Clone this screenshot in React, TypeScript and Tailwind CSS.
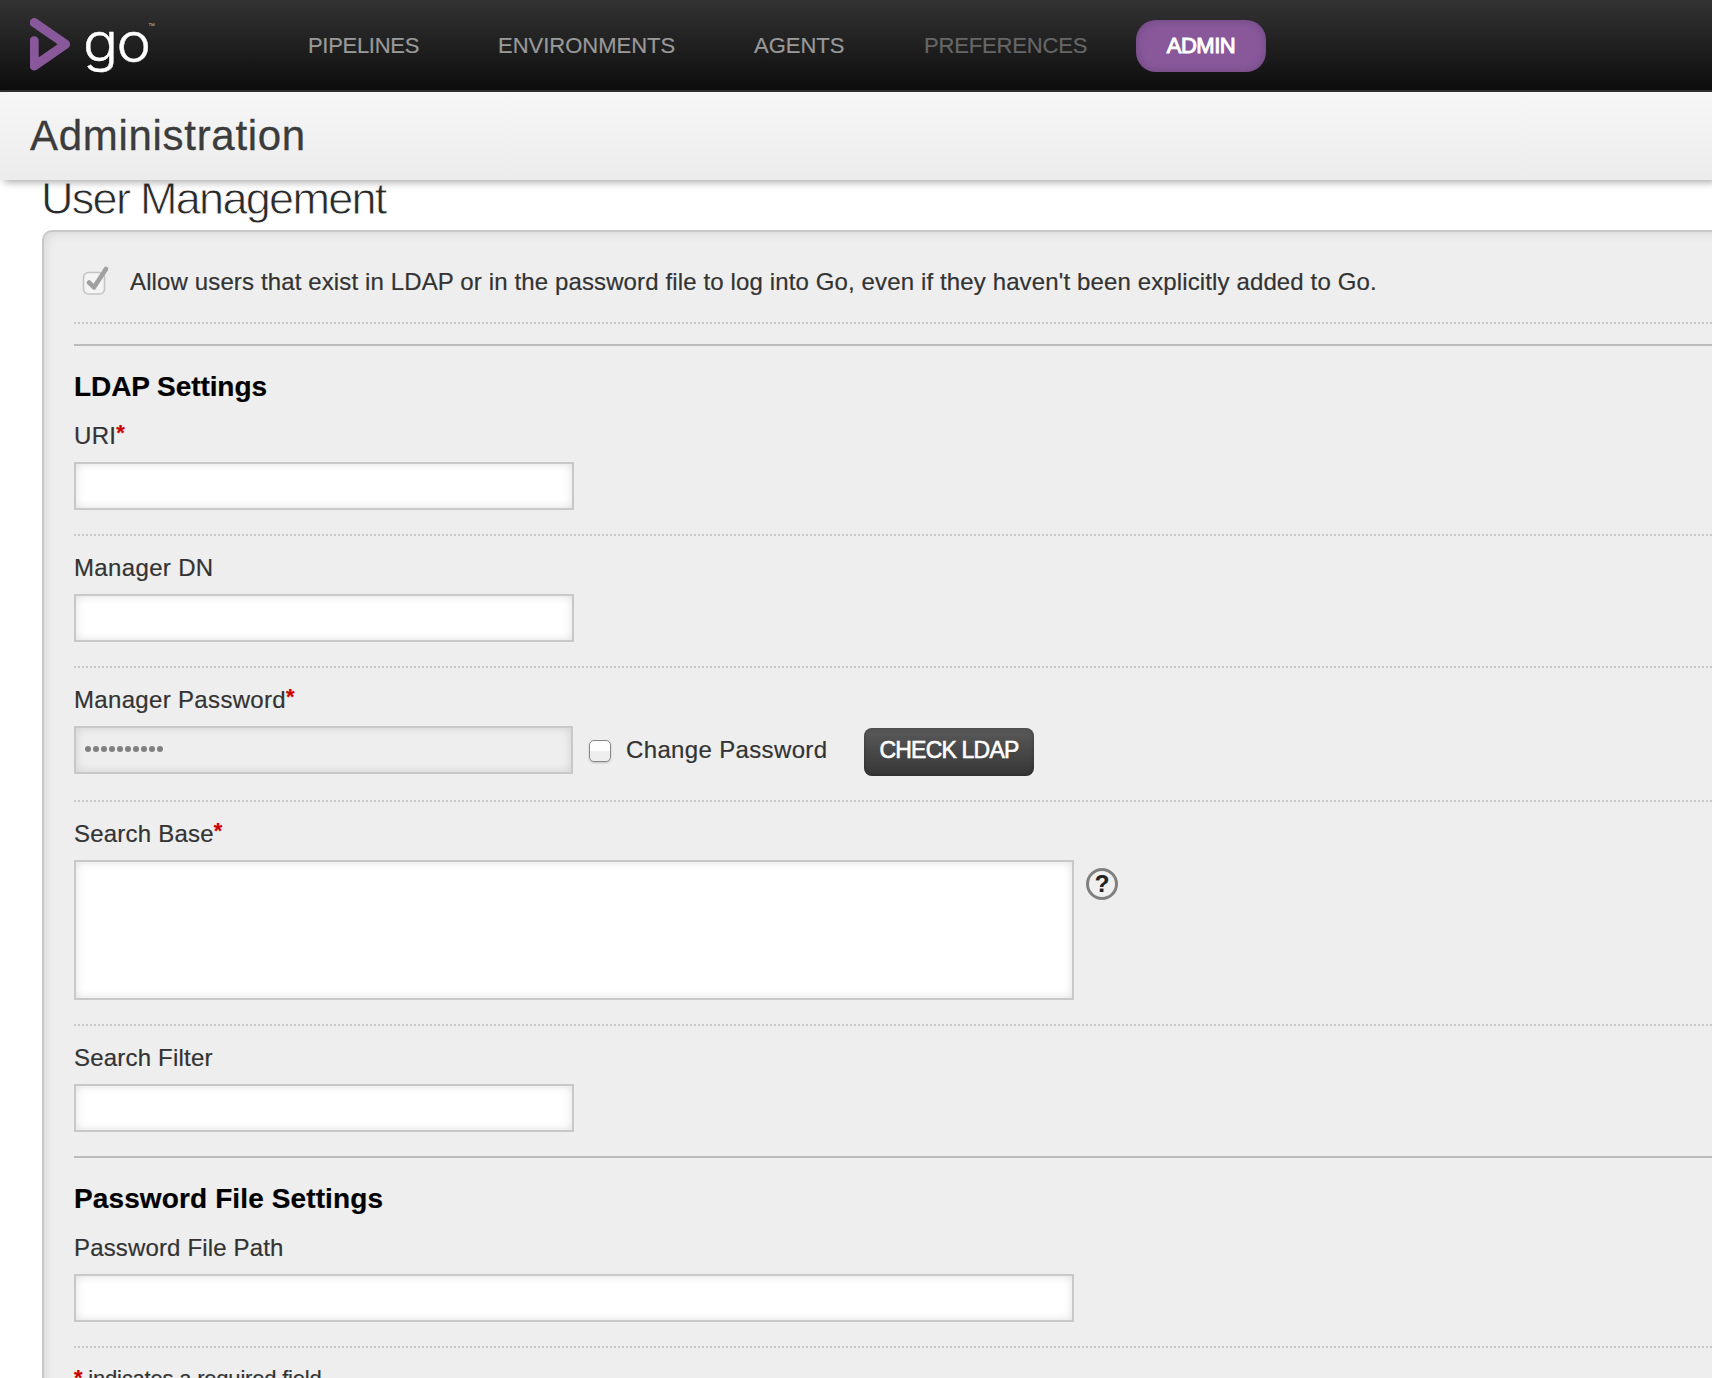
import React from "react";

function Logo() {
  return (
    <div className="flex h-[90px] w-[310px] items-start pl-[30px]">
      <svg className="mt-[18px] h-[53px] w-[41px]" viewBox="0 0 41 53">
        <path
          d="M4.2 4.5 L35.6 26.2 L4.2 48 V22.8"
          fill="none"
          stroke="#88589b"
          strokeWidth="9"
          strokeLinecap="round"
          strokeLinejoin="round"
        />
      </svg>
      <span className="mt-[9px] ml-[12px] w-[65px] origin-left scale-x-112 font-['Inter'] text-[52px] leading-[68px] font-light tracking-[-1.4px] text-white [-webkit-text-stroke:0.4px_white]">
        go
      </span>
      <span className="mt-[19px] text-[7px] leading-[14px] text-[#bbb]">™</span>
    </div>
  );
}

function Header() {
  return (
    <header className="flex h-[92px] items-start border-b-2 border-[#333] bg-linear-to-b from-[#333] to-[#0e0e0e] text-[22px] leading-[26px] text-[#999]">
      <Logo />
      <nav className="flex items-start pt-[20px] [-webkit-text-stroke:0.2px_currentColor]">
        <a className="mt-[13px] ml-[-2px] w-[190px] tracking-[-0.3px]">PIPELINES</a>
        <a className="mt-[13px] w-[256px]">ENVIRONMENTS</a>
        <a className="mt-[13px] w-[170px]">AGENTS</a>
        <a className="mt-[13px] w-[212px] tracking-[-0.15px] text-[#666]">PREFERENCES</a>
        <a className="flex h-[52px] w-[130px] justify-center rounded-[20px] bg-[#88589b] pt-[13px] tracking-[-0.5px] text-white shadow-[inset_0_0_10px_rgba(0,0,0,0.2)] [-webkit-text-stroke:1px_white]">
          ADMIN
        </a>
      </nav>
    </header>
  );
}

function Dotted() {
  return (
    <div className="h-[2px] bg-[repeating-linear-gradient(90deg,#c8c8c8_0_2px,transparent_2px_4px)]" />
  );
}

function Star() {
  return <span className="relative top-[-4px] text-[22px] font-bold tracking-normal text-[#c00]">*</span>;
}

const box = "border-2 border-[#c8c8c8] shadow-[inset_0_0_10px_rgba(0,0,0,0.13)]";

type FieldProps = {
  label: string;
  tracking: string;
  required?: boolean;
  first?: boolean;
  children: React.ReactNode;
};

function Field({ label, tracking, required, first, children }: FieldProps) {
  return (
    <div className={(first ? "pt-5" : "pt-[18px]") + " pb-6"}>
      <label className={"mb-3 block h-7 " + tracking}>
        {label}
        {required && <Star />}
      </label>
      {children}
    </div>
  );
}

export default function App() {
  return (
    <div className="h-[1378px] w-full overflow-hidden bg-white font-['Liberation_Sans',Arial,sans-serif] text-[24px] leading-7 text-[#333]">
      <Header />
      <div className="relative z-10 h-[88px] bg-linear-to-b from-[#f7f7f7] to-[#ececec] pt-[17px] pl-[30px] shadow-[4px_2px_8px_rgba(0,0,0,0.35)]">
        <h1 className="text-[42px] leading-[54px] tracking-[0.7px] text-[#3c3c3c] [-webkit-text-stroke:0.3px_#3c3c3c]">
          Administration
        </h1>
      </div>
      <h2 className="h-[50px] pt-[1px] pl-[41px] text-[45px] leading-[36px] tracking-[-1.7px] text-[#2a2a2a] [-webkit-text-stroke:0.8px_white]">
        User Management
      </h2>
      <main className="-mr-[30px] ml-[42px] h-[1200px] rounded-tl-[10px] border-t-2 border-l-2 border-[#c8c8c8] bg-[#eee] pl-[30px] shadow-[inset_0_0_12px_rgba(0,0,0,0.12)] [-webkit-text-stroke:0.2px_currentColor]">
        <div className="flex h-[90px] items-start">
          <svg className="mt-[33px] ml-[7px] h-[32px] w-[30px]" viewBox="0 0 30 32">
            <rect x="2.5" y="7.5" width="21" height="21.5" rx="5" fill="#f4f4f4" stroke="#c4c4c4" strokeWidth="1.6" />
            <path d="M8 17.5 L13 22.3 L25 4" fill="none" stroke="#a0a0a0" strokeWidth="4.6" strokeLinecap="round" strokeLinejoin="round" />
          </svg>
          <span className="mt-[36px] ml-[19px] tracking-[0.127px] whitespace-nowrap">
            Allow users that exist in LDAP or in the password file to log into Go, even if they haven't been explicitly added to Go.
          </span>
        </div>
        <Dotted />
        <div className="mt-5 border-t-2 border-[#bbb] pt-[25px]">
          <h3 className="h-[31px] text-[28px] leading-8 font-bold tracking-[-0.08px] text-black">LDAP Settings</h3>
        </div>
        <Field label="URI" tracking="tracking-[0.3px]" required first>
          <div className={"h-12 w-[500px] bg-white " + box} />
        </Field>
        <Dotted />
        <Field label="Manager DN" tracking="tracking-[0.35px]">
          <div className={"h-12 w-[500px] bg-white " + box} />
        </Field>
        <Dotted />
        <Field label="Manager Password" tracking="tracking-[0.33px]" required>
          <div className="flex h-[50px] items-start">
            <div className={"flex h-12 w-[499px] items-center gap-[2px] pl-[9px] " + box}>
              {Array.from({ length: 10 }, (_, i) => (
                <span key={i} className="mb-[2px] size-[6px] rounded-full bg-[#808080]" />
              ))}
            </div>
            <span className="mt-[14px] ml-4 size-[22px] rounded-[5px] border-[1.5px] border-[#888] bg-linear-to-b from-white from-50% to-[#eee] to-50% shadow-[0_1px_2px_rgba(0,0,0,0.2)]" />
            <span className="mt-[10px] ml-[15px] w-[238px] tracking-[0.35px]">Change Password</span>
            <button className="mt-[2px] flex h-12 w-[170px] justify-center rounded-[8px] bg-linear-to-b from-[#5a5a5a] to-[#363636] pt-[9px] text-[23px] leading-[26px] tracking-[-0.8px] whitespace-nowrap text-white shadow-[inset_0_0_4px_rgba(0,0,0,0.3)] [-webkit-text-stroke:0.6px_white]">
              CHECK LDAP
            </button>
          </div>
        </Field>
        <Dotted />
        <Field label="Search Base" tracking="tracking-[0.22px]" required>
          <div className="flex items-start gap-3">
            <div className={"h-[140px] w-[1000px] bg-white " + box} />
            <span className="mt-2 flex size-8 items-center justify-center rounded-full border-[3px] border-[#808080] bg-[#f0f0f0] text-[24px] leading-none font-bold text-[#222]">
              ?
            </span>
          </div>
        </Field>
        <Dotted />
        <Field label="Search Filter" tracking="tracking-[0.2px]">
          <div className={"h-12 w-[500px] bg-white " + box} />
        </Field>
        <div className="border-t-2 border-[#bbb] pt-[25px]">
          <h3 className="h-[31px] text-[28px] leading-8 font-bold tracking-[0.12px] text-black">Password File Settings</h3>
        </div>
        <Field label="Password File Path" tracking="tracking-[0.15px]" first>
          <div className={"h-12 w-[1000px] bg-white " + box} />
        </Field>
        <Dotted />
        <p className="pt-[17px] text-[22px] leading-7 tracking-[-0.2px]">
          <span className="relative top-[-1px] font-bold text-[#c00]">*</span> indicates a required field
        </p>
      </main>
    </div>
  );
}
